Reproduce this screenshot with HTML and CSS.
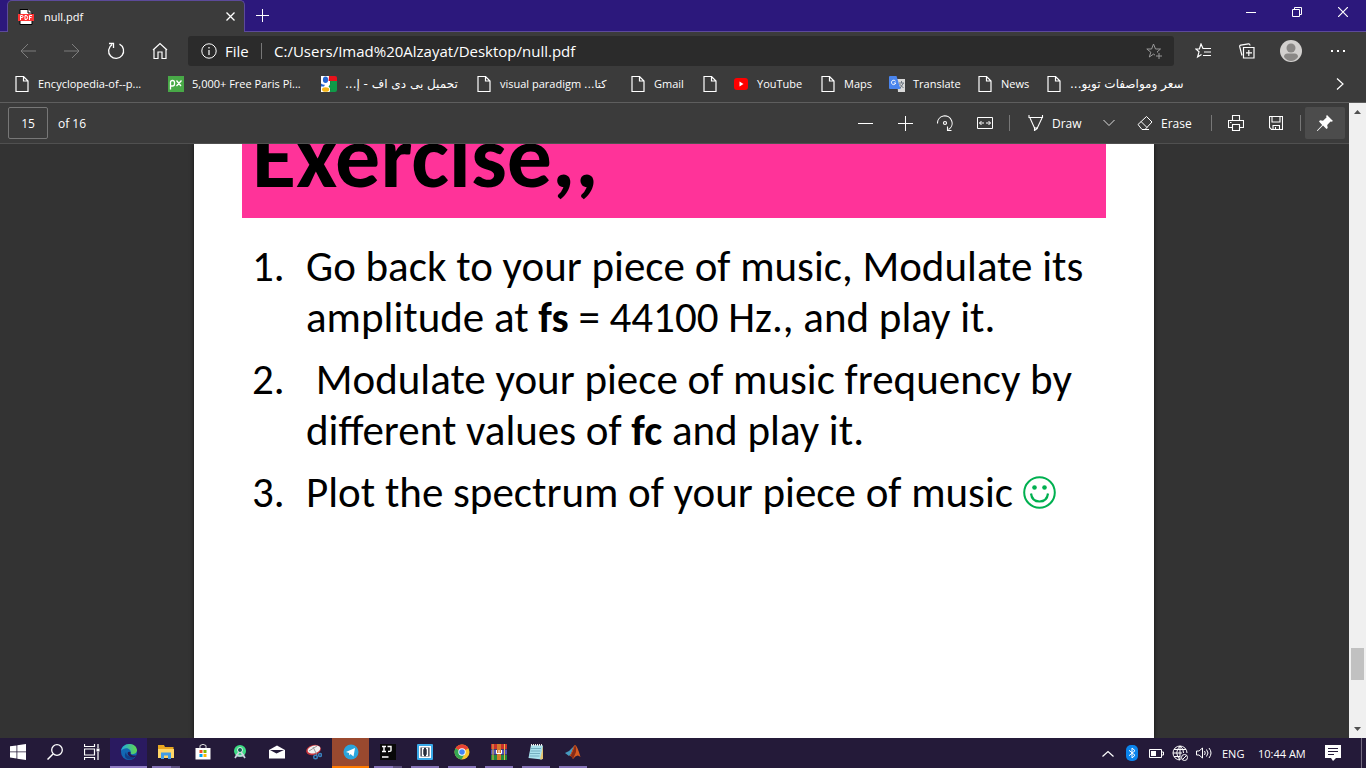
FILE: index.html
```html
<!DOCTYPE html>
<html lang="en">
<head>
<meta charset="utf-8">
<title>null.pdf</title>
<link rel="stylesheet" href="styles.css">
</head>
<body>
<svg class="defs" aria-hidden="true">
  <symbol id="page" viewBox="0 0 16 16"><path d="M2 .5h7.500l4.500 4.500v10.500H2zM9.500.5v4.500H14" fill="none" stroke="#fff" stroke-width="1.200"/></symbol>
  <symbol id="star" viewBox="0 0 16 16"><path d="M11.500 9.500 11 9l3.500-3H9.500L7.500 1 5.600 6H.8l4 3.200L3.300 14l4.200-2.900 1.500 1" fill="none" stroke="currentColor"/></symbol>
</svg>

<header class="titlebar">
  <div class="tab">
    <svg width="16" height="16" viewBox="0 0 16 16"><path d="M2 .5h8L14 4v11.500H2z" fill="#fff" stroke="#000"/><path d="M10 0v4h4" fill="#fff" stroke="#000"/><path d="M0 5h16v7H0z" fill="#f33"/><path d="M2.500 11V6.500H4q1 0 1 1t-1 1H2.500M7 6.500v4h1q1.500 0 1.500-2T8 6.500zM11.500 11V6.500H14M11.500 8.500h2" fill="none" stroke="#fff"/></svg>
    <span class="tab-title">null.pdf</span>
    <button class="icon-btn tab-close" aria-label="Close tab"><svg width="9" height="9" viewBox="0 0 9 9"><path d="m.5.5 8 8m0-8-8 8" stroke="#fff" stroke-width="1.300"/></svg></button>
  </div>
  <button class="icon-btn new-tab" aria-label="New tab"><svg width="13" height="13" viewBox="0 0 13 13"><path d="M6.500 0v13M0 6.500h13" stroke="#fff"/></svg></button>
  <div class="window-buttons">
    <button class="icon-btn" aria-label="Minimize"><svg width="10" height="10" viewBox="0 0 10 10"><path d="M0 5.500h10" stroke="#fff"/></svg></button>
    <button class="icon-btn" aria-label="Restore"><svg width="10" height="10" viewBox="0 0 10 10"><path d="M.5 2.500h7v7h-7zM2.500 2.500v-2h7v7h-2" fill="none" stroke="#fff"/></svg></button>
    <button class="icon-btn" aria-label="Close"><svg width="10" height="10" viewBox="0 0 10 10"><path d="m0 0 10 10M10 0 0 10" stroke="#fff" stroke-width="1.200"/></svg></button>
  </div>
</header>

<nav class="toolbar">
  <button class="icon-btn nav-btn" aria-label="Back"><svg width="16" height="16" viewBox="0 0 16 16"><path d="M16 8H1m7-7L1 8l7 7" fill="none" stroke="#7d7d7d"/></svg></button>
  <button class="icon-btn nav-btn" aria-label="Forward"><svg width="16" height="16" viewBox="0 0 16 16"><path d="M0 8h15M8 1l7 7-7 7" fill="none" stroke="#7d7d7d"/></svg></button>
  <button class="icon-btn nav-btn" aria-label="Refresh"><svg width="18" height="18" viewBox="0 0 18 18"><path d="M12.500 2.200A7.500 7.500 0 1 1 5 2.600M2 1.500h4.500V6" fill="none" stroke="#fff" stroke-width="1.300"/></svg></button>
  <button class="icon-btn nav-btn" aria-label="Home"><svg width="16" height="18" viewBox="0 0 16 18"><path d="M2 7v9.500h4V10h4v6.500h4V7M1 8l7-6.500L15 8" fill="none" stroke="#fff" stroke-width="1.200"/></svg></button>
  <div class="address">
    <svg width="16" height="16" viewBox="0 0 16 16"><circle cx="8" cy="8" r="7.200" fill="none" stroke="#fff"/><path d="M8 7v5M8 4v1.500" stroke="#fff" stroke-width="1.200"/></svg>
    <span class="scheme">File</span>
    <input class="url" type="text" aria-label="Address" value="C:/Users/Imad%20Alzayat/Desktop/null.pdf">
    <button class="icon-btn fav" aria-label="Add to favorites"><svg width="18" height="16" viewBox="0 0 18 16"><use href="#star" width="16" height="16"/><path d="M13 10v6m-3-3h6" stroke="currentColor"/></svg></button>
  </div>
  <button class="icon-btn nav-btn" aria-label="Favorites"><svg width="16" height="16" viewBox="0 0 16 16"><path d="M9 5.500H8L6 1 4.400 6H.8L4 8.800 2.600 14 6.500 11.500M8 5.500h8M9 9h7M8 12.500h8" fill="none" stroke="#fff" stroke-width="1.200"/></svg></button>
  <button class="icon-btn nav-btn" aria-label="Collections"><svg width="16" height="16" viewBox="0 0 16 16"><path d="M4.500 4.500h10.500V15H4.500zM9.800 7v6M7 9.800h6M3 12.500 .7 3.700Q.5 2.500 1.700 2.200L9.500.8q1.200-.2 1.600 1.700" fill="none" stroke="#fff" stroke-width="1.200"/></svg></button>
  <button class="icon-btn nav-btn" aria-label="Profile"><svg width="22" height="22" viewBox="0 0 22 22"><circle cx="11" cy="11" r="11" fill="#d2d0ce"/><circle cx="11" cy="8" r="4.500" fill="#8a8886"/><path d="M4 17q0-3.500 3.500-3.500h7q3.500 0 3.500 3.500-3 4-7 4t-7-4" fill="#8a8886"/></svg></button>
  <button class="icon-btn nav-btn more" aria-label="Settings"><svg width="14" height="4" viewBox="0 0 14 4"><path d="M0 1h2v2H0zM6 1h2v2H6zM12 1h2v2h-2z" fill="#fff"/></svg></button>
</nav>

<nav class="bookmarks" aria-label="Bookmarks">
  <a href="#"><svg width="16" height="16"><use href="#page"/></svg>Encyclopedia-of--p...</a>
  <a href="#"><svg width="16" height="16" viewBox="0 0 16 16"><path d="M0 0h16v16H0z" fill="#48a947"/><path d="M2.500 13.500V6.500q0-2 2-2t2 2v1.500q0 2-2 2h-2M8.500 4.500l4.500 5.500m.5-5.500L8.500 10" fill="none" stroke="#fff" stroke-width="1.300"/></svg>5,000+ Free Paris Pi...</a>
  <a href="#"><svg width="16" height="16" viewBox="0 0 16 16"><path d="M0 0h9v16H0z" fill="#fff"/><path d="M8 0h6q2 0 2 2v3H7.500z" fill="#e8121b"/><path d="M9 5h7v9q0 2-2 2H8.500q2-3-1-5.500Q10 8 9 5" fill="#109a48"/><ellipse cx="4.500" cy="3.800" rx="2.600" ry="3.300" fill="#2464cf"/><path d="M0 7.500q2 1.500 4 1.300L3 10.500H0z" fill="#2464cf"/><ellipse cx="4.600" cy="13.500" rx="3.600" ry="2.300" fill="#f6b515"/></svg><span class="arabic" dir="rtl" lang="ar">تحميل بی دی اف - إ...</span></a>
  <a href="#"><svg width="16" height="16"><use href="#page"/></svg><span>visual paradigm <bdi class="arabic" dir="rtl" lang="ar">كتا...</bdi></span></a>
  <a href="#"><svg width="16" height="16"><use href="#page"/></svg>Gmail</a>
  <a href="#" aria-label="Bookmark"><svg width="16" height="16"><use href="#page"/></svg></a>
  <a href="#"><svg width="16" height="16" viewBox="0 0 16 16"><rect x="1" y="2" width="14" height="12" rx="3" fill="red"/><path d="m6.500 5.500 4 2.500-4 2.500z" fill="#fff"/></svg>YouTube</a>
  <a href="#"><svg width="16" height="16"><use href="#page"/></svg>Maps</a>
  <a href="#"><svg width="16" height="16" viewBox="0 0 16 16"><path d="M8 3h8v13H9z" fill="#d9d9d9"/><path d="M10 7h5m-2.500-2v2m2 0-4 6m0-5 4 4" stroke="#6c7680" fill="none"/><path d="M1 0h6.500l4 13H1q-1 0-1-1V1q0-1 1-1" fill="#4a85ee"/><path d="M6.500 5.200a2.200 2.200 0 1 0 .3 1.800H4.800" fill="none" stroke="#fff"/></svg>Translate</a>
  <a href="#"><svg width="16" height="16"><use href="#page"/></svg>News</a>
  <a href="#"><svg width="16" height="16"><use href="#page"/></svg><span class="arabic" dir="rtl" lang="ar">سعر ومواصفات تويو...</span></a>
  <button class="icon-btn" aria-label="More bookmarks"><svg width="8" height="12" viewBox="0 0 8 12"><path d="m1 .5 6 5.500-6 5.500" fill="none" stroke="#fff" stroke-width="1.200"/></svg></button>
</nav>

<div class="workspace">
  <main class="reader">
    <div class="pdf-bar">
      <input class="page-number" type="text" id="pageno" value="15">
      <label class="page-total" for="pageno">of 16</label>
      <div class="pdf-tools">
        <button class="icon-btn" aria-label="Zoom out"><svg width="15" height="15" viewBox="0 0 15 15"><path d="M0 7.500h15" stroke="#fff"/></svg></button>
        <button class="icon-btn" aria-label="Zoom in"><svg width="15" height="15" viewBox="0 0 15 15"><path d="M0 7.500h15M7.500 0v15" stroke="#fff"/></svg></button>
        <button class="icon-btn" aria-label="Rotate"><svg width="16" height="16" viewBox="0 0 16 16"><path d="M.5 8.500A7.300 7.300 0 1 1 11.500 14.500M10.500 11.500v4h4" fill="none" stroke="#fff" stroke-width="1.100"/><circle cx="8" cy="8" r="1.500" fill="none" stroke="#fff" stroke-width="1.200"/></svg></button>
        <button class="icon-btn" aria-label="Fit to width"><svg width="16" height="12" viewBox="0 0 16 12"><path d="M.5.5h15v11H.5zM2.500 6H7M9 6h4.500M4.500 4 2.500 6l2 2m7-4 2 2-2 2" fill="none" stroke="#fff"/></svg></button>
        <span class="divider"></span>
        <button class="text-btn draw"><svg width="16" height="16" viewBox="0 0 16 16"><path d="M1 0v2.500h13.500V0M2 3l4.500 10h2.800L14 3M6.500 12v3.500l2.800-2V12" fill="none" stroke="#fff" stroke-width="1.100"/></svg>Draw</button>
        <button class="icon-btn" aria-label="Draw options"><svg width="12" height="8" viewBox="0 0 12 8"><path d="m.5 1 5.500 5.500L11.500 1" fill="none" stroke="#ddd"/></svg></button>
        <button class="text-btn erase"><svg width="16" height="16" viewBox="0 0 16 16"><path d="M1 9.500 9.500 1.500 15 7l-7 7.500H5zM4 6.500l6 6M7 14.500h5" fill="none" stroke="#fff"/></svg>Erase</button>
        <span class="divider"></span>
        <button class="icon-btn" aria-label="Print"><svg width="16" height="16" viewBox="0 0 16 16"><path d="M4.500 5V.5h7V5M4.500 12.500h-4V5.500h15v7h-4M4.500 9.500h7v6h-7zM2 7.500h1.500" fill="none" stroke="#fff" stroke-width="1.100"/></svg></button>
        <button class="icon-btn" aria-label="Save"><svg width="14" height="14" viewBox="0 0 14 14"><path d="M.5.5h13v13H2.500l-2-2zM3 .5v5.500h8V.5M4 13.500V9.500h6.500v4M6.500 11v2.500" fill="none" stroke="#fff" stroke-width="1.100"/></svg></button>
        <span class="divider"></span>
        <button class="icon-btn pin" aria-label="Unpin toolbar"><svg width="16" height="16" viewBox="0 0 16 16"><path d="m10 0 6 6-1.500.8-1-.3-3.300 3.500.5 3-1.200 1-3.500-3.500L.5 16H0v-.5L5.200 10 2 6.500 3 5.300l3 .5L9.500 2.500 9.200 1z" fill="#fff"/></svg></button>
      </div>
    </div>
    <div class="viewer">
      <article class="sheet">
        <h1 class="banner"><span>Exercise,,</span></h1>
        <ol class="exercises">
          <li><p>Go back to your piece of music, Modulate its amplitude at <b>fs</b> = 44100 Hz., and play it.</p></li>
          <li><p>&nbsp;Modulate your piece of music frequency by different values of <b>fc</b> and play it.</p></li>
          <li><p>Plot the spectrum of your piece of music <svg class="smiley" width="33" height="33" viewBox="0 0 33 33" role="img" aria-label="Smiley"><circle cx="16.500" cy="16.500" r="15.300" fill="none" stroke="#00b050" stroke-width="2"/><circle cx="11.500" cy="11.500" r="2.300" fill="#00b050"/><circle cx="21.500" cy="11.500" r="2.300" fill="#00b050"/><path d="M8 17.500q1 8 8.500 8t8.500-8" fill="none" stroke="#00b050" stroke-width="2.200"/></svg></p></li>
        </ol>
      </article>
    </div>
  </main>
  <div class="scrollbar" aria-hidden="true">
    <svg width="17" height="17" viewBox="0 0 17 17"><path d="M5 11h7L8.500 7z" fill="#505050"/></svg>
    <div class="thumb"></div>
    <svg width="17" height="17" viewBox="0 0 17 17"><path d="M5 6h7l-3.500 4z" fill="#505050"/></svg>
  </div>
</div>

<footer class="taskbar">
  <button class="app start" aria-label="Start"><svg width="16" height="16" viewBox="0 0 16 16"><path d="M0 2.300 6.500 1.400v6.100H0zM7.300 1.300 16 0v7.500H7.300zM0 8.300h6.500v6.200L0 13.600zM7.300 8.300H16V16l-8.700-1.300z" fill="#fff"/></svg></button>
  <button class="app" aria-label="Search"><svg width="16" height="16" viewBox="0 0 16 16"><circle cx="10" cy="6" r="5.300" fill="none" stroke="#fff" stroke-width="1.300"/><path d="M6 10 .5 15.500" stroke="#fff" stroke-width="1.500"/></svg></button>
  <button class="app" aria-label="Task view"><svg width="16" height="16" viewBox="0 0 16 16"><path d="M.5 0v2.500h10V0M.5 16v-2.500h10V16M.5 5h10v6H.5zM14 0v4m0 4v8" fill="none" stroke="#fff" stroke-width="1.200"/><path d="M12.500 4.500h3v3h-3z" fill="#fff"/></svg></button>
  <button class="app active" aria-label="Edge"><svg width="16" height="16" viewBox="0 0 16 16"><defs><linearGradient id="eg" x1="0" x2="1"><stop offset="0" stop-color="#21a9df"/><stop offset="1" stop-color="#62d64d"/></linearGradient></defs><circle cx="8" cy="8" r="8" fill="#1268b4"/><path d="M0 7.500C1-2 15-2.500 16 6c0 4-5 5-6.500 3.500C11 7 8 4 5 4.200 2 4.500 0 6 0 7.500" fill="url(#eg)"/><path d="M5 8q0 6 9.500 4.500Q11 17 6.500 15T5 8" fill="#103f89"/><path d="M9.500 9.500Q10 12 15.500 11.500L14 13q-7 1-7.500-4 1-2 3-1z" fill="#281a55"/></svg></button>
  <button class="app running stacked" aria-label="File Explorer"><svg width="16" height="16" viewBox="0 0 16 16"><path d="M0 1h6l1 2h8.500v11H0z" fill="#e9a720"/><path d="M0 5h16v9H0z" fill="#ffd667"/><path d="M3 15V8.500h10V15h-3v-3.500H6V15z" fill="#409ce5"/></svg></button>
  <button class="app" aria-label="Store"><svg width="16" height="16" viewBox="0 0 16 16"><path d="M5 4V1.500Q8-.8 11 1.500V4" fill="none" stroke="#ddd"/><path d="M.5 4h15v11.500H.5z" fill="#fff"/><path d="M4.500 6h3v3h-3z" fill="#f25022"/><path d="M8.500 6h3v3h-3z" fill="#7fba00"/><path d="M4.500 10h3v3h-3z" fill="#00a4ef"/><path d="M8.500 10h3v3h-3z" fill="#ffb900"/></svg></button>
  <button class="app" aria-label="Android Studio"><svg width="16" height="16" viewBox="0 0 16 16"><circle cx="8" cy="7" r="6" fill="#3ddc84"/><circle cx="8" cy="6" r="2.500" fill="#145b55" stroke="#d9f6e6"/><path d="m7 8-4 6m6-6 4 6M4 10.500q4 3 8 0" fill="none" stroke="#cbd4df" stroke-width="1.700"/></svg></button>
  <button class="app" aria-label="Mail"><svg width="16" height="14" viewBox="0 0 16 14"><path d="M0 5 8 .5 16 5v8.500H0z" fill="#fff"/><path d="M1 5h14L7.500 8.500z" fill="#241a39"/></svg></button>
  <button class="app" aria-label="Snipping Tool"><svg width="16" height="16" viewBox="0 0 16 16"><ellipse cx="7.500" cy="6" rx="7.500" ry="5" fill="#c8343b" transform="rotate(-15 7.500 6)"/><ellipse cx="8" cy="5.500" rx="6.500" ry="3.800" fill="#f2f2f2" transform="rotate(-15 8 5.500)"/><path d="m3 7 8-5M7 3l4 8" stroke="#999"/><circle cx="9.500" cy="13" r="1.800" fill="none" stroke="#3a82bd" stroke-width="1.400"/><circle cx="14" cy="11" r="1.500" fill="none" stroke="#3a82bd" stroke-width="1.400"/></svg></button>
  <button class="app alert" aria-label="Telegram"><svg width="16" height="16" viewBox="0 0 16 16"><circle cx="8" cy="8" r="7.500" fill="#2ba5dc"/><path d="m3 8 9-4-1.500 8.500L7.500 10 6.300 11.500 6 9z" fill="#fff"/></svg></button>
  <button class="app running stacked" aria-label="IntelliJ IDEA"><svg width="16" height="16" viewBox="0 0 16 16"><path d="M0 0h16v16H0z" fill="#080808"/><path d="M2 2.500h4m-2 0v5m-2 0h4M7.500 2.500h3.500v4q0 1-3 1M2 13h6.500" fill="none" stroke="#fff" stroke-width="1.400"/></svg></button>
  <button class="app running" aria-label="Brackets"><svg width="16" height="16" viewBox="0 0 16 16"><rect width="16" height="16" rx="1" fill="#3aa9e8"/><path d="M2 2h12v12H2z" fill="#fff"/><path d="M3.500 3.500h9v9h-9z" fill="#262d3c"/><path d="M7 4.500H5.500v7H7M9 4.500h1.500v7H9" fill="none" stroke="#fff" stroke-width="1.500"/></svg></button>
  <button class="app running" aria-label="Chrome"><svg width="16" height="16" viewBox="0 0 16 16"><circle cx="8" cy="8" r="7.500" fill="#f9c62c"/><path d="M8 8 1.500 4.300a7.500 7.500 0 0 1 13 0z" fill="#e84234"/><path d="M8 8 1.500 4.300A7.500 7.500 0 0 0 7.500 15.500L11 9.500z" fill="#34a853"/><circle cx="8" cy="8" r="3.700" fill="#fff"/><circle cx="8" cy="8" r="2.800" fill="#4285f4"/></svg></button>
  <button class="app running" aria-label="WinRAR"><svg width="16" height="16" viewBox="0 0 16 16"><path d="M0 0h16v5H0z" fill="#c9302c"/><path d="M0 5.500h16v5H0z" fill="#5554b5"/><path d="M0 11h16v5H0z" fill="#238a3b"/><path d="M6 0h4v16H6z" fill="#d57a2b"/><path d="M2 0v16M13.500 0v16" stroke="#e5b847"/><path d="M5.500 6v3.500h5V6M8 6v3" fill="none" stroke="#fff"/></svg></button>
  <button class="app running" aria-label="Notepad"><svg width="16" height="16" viewBox="0 0 16 16"><path d="m3 1 12 .5-1 14L.5 14z" fill="#a9e1ed"/><path d="M15 2v13l-3 .5z" fill="#e5c572"/><path d="M3 4.500h10M2.500 7h10M2 9.500h10M1.500 12h10" stroke="#5d9aac" stroke-width=".7"/><path d="M3 1h12" stroke="#eee" stroke-width="1.800" stroke-dasharray="1 1"/></svg></button>
  <button class="app running" aria-label="MATLAB"><svg width="16" height="16" viewBox="0 0 16 16"><path d="m0 9 4-2 5-5-3 8-2 2z" fill="#479bc0"/><path d="M4 12C7 11 8 1 10 1q2 0 5.500 12Q12 9 8 15 6 11 4 12" fill="#d85c20"/><path d="M10 1q2 3 1 7l-3 7Q6.500 12 5.500 12 8 8 10 1" fill="#882b18"/></svg></button>

  <div class="tray">
    <button class="tray-icon" aria-label="Show hidden icons"><svg width="12" height="7" viewBox="0 0 12 7"><path d="m.5 6.500 5.500-5 5.500 5" fill="none" stroke="#fff" stroke-width="1.200"/></svg></button>
    <button class="tray-icon" aria-label="Bluetooth"><svg width="12" height="16" viewBox="0 0 12 16"><rect width="12" height="16" rx="5" fill="#0a84ed"/><path d="m3 5.300 6 5L6 13V3l3 2.700-6 5" fill="none" stroke="#fff"/></svg></button>
    <button class="tray-icon" aria-label="Battery"><svg width="15" height="9" viewBox="0 0 15 9"><path d="M.5.5h12v8H.5zM13 3h1.500v3H13" fill="none" stroke="#fff"/><path d="M2 2h5v5H2z" fill="#fff"/></svg></button>
    <button class="tray-icon" aria-label="Network"><svg width="16" height="16" viewBox="0 0 16 16"><path d="M8 15A7 7 0 1 1 15 8M8 1Q1.500 7.500 8 15M8 1q4 3 3.500 7M8 1v14M1 8h9M2 4.500h12M2 11.500h6" fill="none" stroke="#fff"/><circle cx="12.500" cy="12.500" r="3" fill="#241a39" stroke="#fff"/><path d="m10.500 14.500 4-4" stroke="#fff"/></svg></button>
    <button class="tray-icon" aria-label="Volume"><svg width="16" height="12" viewBox="0 0 16 12"><path d="M.5 4v4H3l3.500 3V1L3 4zM8.500 4q1.500 2 0 4M10.500 2.500q3 3.500 0 7M13 1q4 5 0 10" fill="none" stroke="#fff"/></svg></button>
    <span class="language">ENG</span>
    <time class="clock">10:44 AM</time>
    <button class="tray-icon" aria-label="Notifications"><svg width="16" height="16" viewBox="0 0 16 16"><path d="M0 0h16v13h-5l-3 3-2-3H0z" fill="#fff"/><path d="M3 3.500h10M3 6.500h10M3 9.500h6" stroke="#241a39"/></svg></button>
    <span class="desktop-edge"></span>
  </div>
</footer>
</body>
</html>
```
FILE: styles.css
```css
* { box-sizing: border-box; }

body {
  margin: 0;
  height: 100vh;
  display: flex;
  flex-direction: column;
  overflow: hidden;
  background: #333;
  color: #fff;
  font: 12px "Open Sans", "Noto Sans", sans-serif;
}

svg { flex: none; }
.defs { position: absolute; width: 0; height: 0; }

button, input { font: inherit; color: inherit; }
button { border: 0; padding: 0; background: none; }

.icon-btn {
  display: flex;
  flex: none;
  align-items: center;
  justify-content: center;
}

/* Title bar */
.titlebar {
  display: flex;
  flex: none;
  height: 32px;
  padding-left: 7px;
  background: #2c187c;
  border-bottom: 1px solid #5c4a9a;
}
.tab {
  display: flex;
  align-items: center;
  width: 238px;
  height: 32px;
  padding: 0 9px 0 10px;
  gap: 10px;
  background: #3b3b3b;
  border: 1px solid #5c4a9a;
  border-bottom: 0;
  border-radius: 5px 5px 0 0;
}
.tab-title { flex: 1; font-size: 11px; }
.tab-close { width: 9px; }
.new-tab { width: 34px; }
.window-buttons { display: flex; margin-left: auto; height: 23px; }
.window-buttons .icon-btn { width: 46px; }

/* Navigation */
.toolbar {
  display: flex;
  flex: none;
  align-items: center;
  height: 37px;
  padding: 0 3px 0 6px;
  background: #3b3b3b;
}
.nav-btn { width: 44px; height: 32px; }
.more { width: 50px; }
.address {
  display: flex;
  flex: 1;
  align-items: center;
  height: 30px;
  margin: 0 7px 0 6px;
  padding: 0 10px 0 13px;
  background: #2b2b2b;
  border-radius: 3px;
  font-size: 15px;
}
.scheme {
  flex: none;
  width: 37px;
  height: 16px;
  margin-left: 8px;
  line-height: 16px;
  border-right: 1px solid #777;
}
.url {
  flex: 1;
  min-width: 0;
  padding: 0 0 0 12px;
  background: none;
  border: 0;
}
.fav { color: #999; }

/* Bookmarks */
.bookmarks {
  display: grid;
  grid-template-columns: 154px 153px 155px 154px 72px 31px 87px 69px 88px 69px 1fr 28px;
  flex: none;
  align-items: center;
  height: 34px;
  padding: 0 12px 4px 14px;
  background: #3b3b3b;
  border-bottom: 1px solid #5e5e5e;
  font-size: 11px;
}
.bookmarks a {
  display: flex;
  align-items: center;
  gap: 8px;
  color: #fff;
  text-decoration: none;
  white-space: nowrap;
}
.arabic { font-family: "DejaVu Sans", sans-serif; }
.bookmarks a > .arabic { font-size: 12px; }

/* Reader */
.workspace { display: flex; flex: 1; min-height: 0; }
.reader { display: flex; flex: 1; flex-direction: column; min-width: 0; }
.pdf-bar {
  display: flex;
  flex: none;
  align-items: center;
  height: 41px;
  padding: 0 4px 0 8px;
  background: #3b3b3b;
  border-bottom: 1px solid #505050;
}
.page-number {
  width: 40px;
  height: 32px;
  padding: 0;
  background: none;
  border: 1px solid #777;
  border-radius: 2px;
  text-align: center;
}
.page-total { margin-left: 10px; }
.pdf-tools { display: flex; align-items: center; margin-left: auto; }
.pdf-tools .icon-btn { width: 40px; height: 32px; }
.divider { width: 1px; height: 16px; margin: 0 4px; background: #777; }
.text-btn { display: flex; align-items: center; gap: 8px; height: 32px; }
.draw { width: 75px; padding-left: 14px; }
.erase { width: 78px; padding-left: 8px; }
.pdf-tools .pin { background: #4c4c4c; border-radius: 2px; }

.viewer { flex: 1; min-height: 0; padding-right: 1px; overflow: hidden; }
.sheet {
  max-width: 960px;
  min-height: 100%;
  margin: 0 auto;
  padding: 0 48px;
  background: #fff;
  box-shadow: 0 0 4px #111;
  color: #000;
  font-family: Carlito, Lato, sans-serif;
}
.banner {
  display: flex;
  align-items: flex-end;
  height: 74px;
  margin: 0 0 23px;
  padding: 0 0 0 10px;
  background: #f39;
  font-size: 90px;
  line-height: 124px;
}
.exercises {
  display: flex;
  flex-direction: column;
  gap: 11px;
  margin: 0;
  padding: 0 10px;
  list-style: none;
  counter-reset: item;
  font-size: 43px;
  line-height: 51px;
}
.exercises li {
  display: grid;
  grid-template-columns: 54px 1fr;
  counter-increment: item;
}
.exercises li::before { content: counter(item) "."; }
.exercises p { margin: 0; }
.smiley { vertical-align: -2px; }

/* Scroll bar */
.scrollbar {
  display: flex;
  flex: none;
  flex-direction: column;
  align-items: center;
  width: 17px;
  background: #f0f0f0;
}
.thumb { width: 13px; height: 32px; margin: auto 0 41px; background: #c1c1c1; }

/* Taskbar */
.taskbar {
  display: flex;
  flex: none;
  height: 30px;
  background: #241a39;
}
.app {
  display: flex;
  align-items: center;
  justify-content: center;
  width: 37px;
  border-bottom: 2px solid transparent;
}
.app.start { width: 36px; }
.app.active { background: #2a1a60; border-color: #8f7cc4; }
.app.alert { background: #99492f; border-color: #ff7b00; }
.app.running {
  border-bottom: 0;
  padding-bottom: 2px;
  background: linear-gradient(#8674b8, #8674b8) center bottom / 28px 2px no-repeat;
}
.app.stacked {
  background: linear-gradient(90deg, #8674b8 19px, #5d507f 19px) center bottom / 28px 2px no-repeat;
}
.tray { display: flex; align-items: center; margin-left: auto; }
.tray-icon { display: flex; align-items: center; justify-content: center; width: 24px; height: 30px; }
.language { width: 42px; padding-left: 6px; font-size: 11px; }
.clock { width: 63px; white-space: nowrap; font-size: 11px; }
.desktop-edge { width: 1px; height: 30px; margin: 0 4px 0 16px; background: #736b80; }
```
